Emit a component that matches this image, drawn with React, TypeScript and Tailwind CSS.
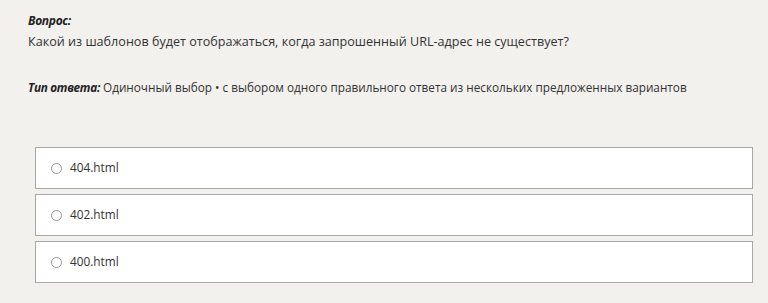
const options = ["404.html", "402.html", "400.html"];

export default function App() {
  return (
    <div className="min-h-[303px] w-full bg-[#f2f1ee] font-['Open_Sans',sans-serif] text-[#222]">
      <div className="px-[28px] pt-[13px]">
        <p className="text-[12px] font-bold italic leading-[16px] tracking-[-0.3px] text-[#222]">Вопрос:</p>
        <p className="mt-[4px] text-[12.6px] leading-[18px] text-[#333]">
          Какой из шаблонов будет отображаться, когда запрошенный URL-адрес не существует?
        </p>
        <p className="mt-[27px] whitespace-nowrap text-[11.75px] leading-[18px] text-[#333]">
          <span className="font-bold italic tracking-[-0.3px] text-[#222]">Тип ответа:</span> Одиночный выбор • с выбором одного правильного ответа из нескольких предложенных вариантов
        </p>
      </div>
      <div className="ml-[35px] mr-[15px] mt-[51px] flex flex-col gap-[5px] pb-[20px]">
        {options.map((opt) => (
          <label
            key={opt}
            className="flex h-[42px] items-center border border-[#a8a8a8] bg-white pl-[15px]"
          >
            <span className="h-[11px] w-[11px] rounded-full border border-[#999] bg-white" />
            <span className="ml-[8px] text-[11.8px] text-[#333]">{opt}</span>
          </label>
        ))}
      </div>
    </div>
  );
}
